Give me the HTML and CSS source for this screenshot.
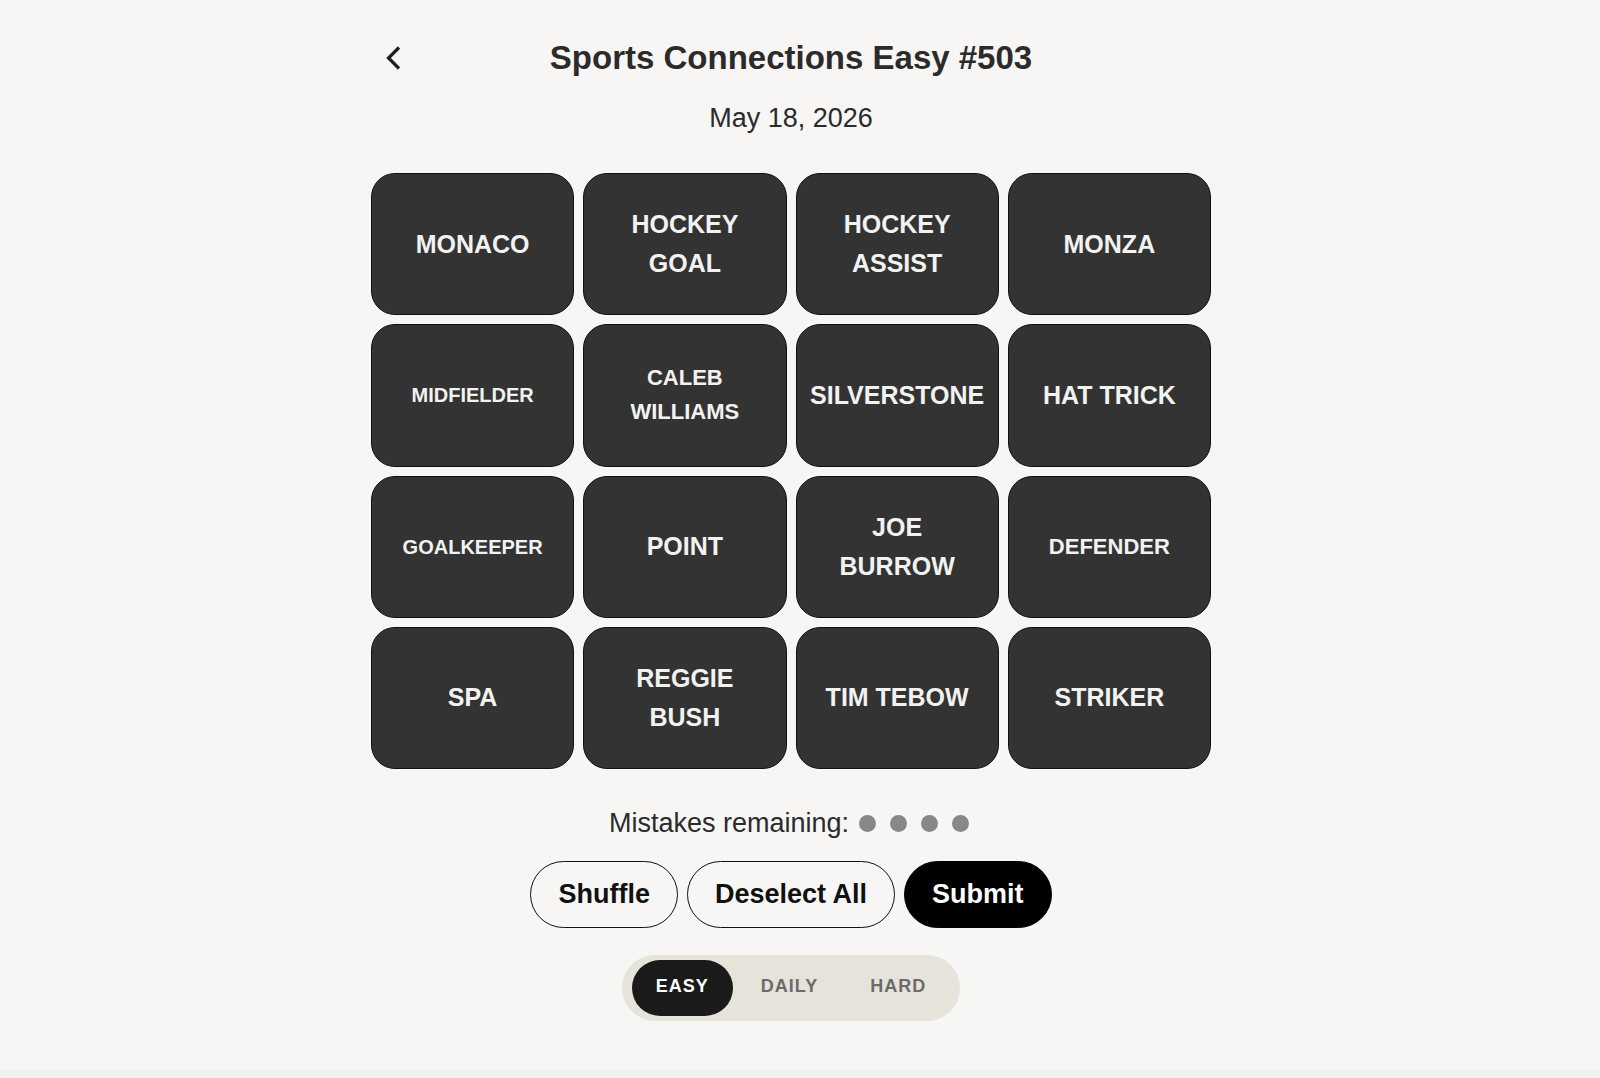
FILE: index.html
```html
<!DOCTYPE html>
<html lang="en">
<head>
    <meta charset="UTF-8">
    <meta name="viewport" content="width=device-width, initial-scale=1.0">
    <title>Sports Connections Easy #503</title>
    <link rel="stylesheet" href="styles.css">
</head>
<body>
    <main class="game">
        <header class="header">
            <button class="back" type="button" aria-label="Back">
                <svg width="16" height="24" viewBox="0 0 16 24">
                    <path d="M14 1.5 L3.5 12 L14 22.5" fill="none" stroke="currentColor" stroke-width="3.2"/>
                </svg>
            </button>
            <h1 class="title">Sports Connections Easy #503</h1>
        </header>
        <p class="date">May 18, 2026</p>

        <div class="board">
            <button class="tile" type="button">MONACO</button>
            <button class="tile" type="button">HOCKEY<br>GOAL</button>
            <button class="tile" type="button">HOCKEY<br>ASSIST</button>
            <button class="tile" type="button">MONZA</button>
            <button class="tile small" type="button">MIDFIELDER</button>
            <button class="tile medium" type="button">CALEB<br>WILLIAMS</button>
            <button class="tile" type="button">SILVERSTONE</button>
            <button class="tile" type="button">HAT TRICK</button>
            <button class="tile small" type="button">GOALKEEPER</button>
            <button class="tile" type="button">POINT</button>
            <button class="tile" type="button">JOE<br>BURROW</button>
            <button class="tile medium" type="button">DEFENDER</button>
            <button class="tile" type="button">SPA</button>
            <button class="tile" type="button">REGGIE<br>BUSH</button>
            <button class="tile" type="button">TIM TEBOW</button>
            <button class="tile" type="button">STRIKER</button>
        </div>

        <div class="mistakes">
            <span>Mistakes remaining:</span>
            <div class="dots">
                <span class="dot"></span>
                <span class="dot"></span>
                <span class="dot"></span>
                <span class="dot"></span>
            </div>
        </div>

        <div class="controls">
            <button class="btn" type="button">Shuffle</button>
            <button class="btn" type="button">Deselect All</button>
            <button class="btn submit" type="button">Submit</button>
        </div>

        <nav class="levels">
            <a class="level active" href="#easy">EASY</a>
            <a class="level" href="#daily">DAILY</a>
            <a class="level" href="#hard">HARD</a>
        </nav>
    </main>
    <footer class="footer"></footer>
</body>
</html>
```
FILE: styles.css
```css
* {
    box-sizing: border-box;
}
body {
    margin: 0;
    min-height: 100vh;
    display: flex;
    flex-direction: column;
    background-color: #f7f6f4;
    color: #2b2b2b;
    font-family: "Liberation Sans", Arial, sans-serif;
}
button {
    font-family: inherit;
    cursor: pointer;
}

.game {
    flex: 1;
    width: 100%;
    display: flex;
    flex-direction: column;
    align-items: center;
    padding: 33px 18px 0 0;
}

/* header */
.header {
    width: 100%;
    max-width: 840px;
    display: grid;
    grid-template-columns: 44px 1fr 44px;
    align-items: center;
}
.back {
    height: 44px;
    padding: 0;
    border: none;
    background: none;
    color: #1f1f1f;
}
.back svg {
    display: block;
    margin: 0 auto;
}
.title {
    margin: 0;
    font-size: 33px;
    line-height: 50px;
    text-align: center;
}
.date {
    margin: 15px 0 35px;
    font-size: 27px;
    line-height: 40px;
}

/* board */
.board {
    width: 100%;
    max-width: 840px;
    display: grid;
    grid-template-columns: repeat(4, 1fr);
    gap: 9px;
}
.tile {
    aspect-ratio: 10 / 7;
    min-width: 0;
    padding: 0;
    border: 1px solid #111;
    border-radius: 24px;
    background-color: #333;
    color: #f2f2f0;
    font-size: 25px;
    font-weight: bold;
    line-height: 39px;
}
.tile.medium {
    font-size: 22px;
    line-height: 34px;
}
.tile.small {
    font-size: 20px;
    line-height: 34px;
}

/* mistakes */
.mistakes {
    display: flex;
    align-items: center;
    gap: 10px;
    margin-top: 34px;
    font-size: 27px;
    line-height: 40px;
}
.dots {
    display: flex;
    gap: 14px;
    padding-right: 4px;
}
.dot {
    width: 17px;
    height: 17px;
    border-radius: 50%;
    background-color: #888886;
}

/* buttons */
.controls {
    display: flex;
    gap: 9px;
    margin-top: 18px;
}
.btn {
    height: 67px;
    padding: 0 27px 1px;
    border: 1px solid #111;
    border-radius: 34px;
    background-color: transparent;
    color: #111;
    font-size: 27px;
    font-weight: bold;
}
.submit {
    background-color: #000;
    border-color: #000;
    color: #fff;
}

/* level switch */
.levels {
    display: flex;
    gap: 4px;
    margin-top: 27px;
    padding: 5px 10px;
    border-radius: 33px;
    background-color: #e5e3da;
}
.level {
    padding: 0 24px 4px;
    border-radius: 28px;
    color: #6b6b6b;
    font-size: 18px;
    font-weight: bold;
    line-height: 52px;
    letter-spacing: 1px;
    text-decoration: none;
}
.level.active {
    background-color: #1a1a1a;
    color: #fff;
}

.footer {
    height: 8px;
    background-color: #f1f0ec;
}
```
